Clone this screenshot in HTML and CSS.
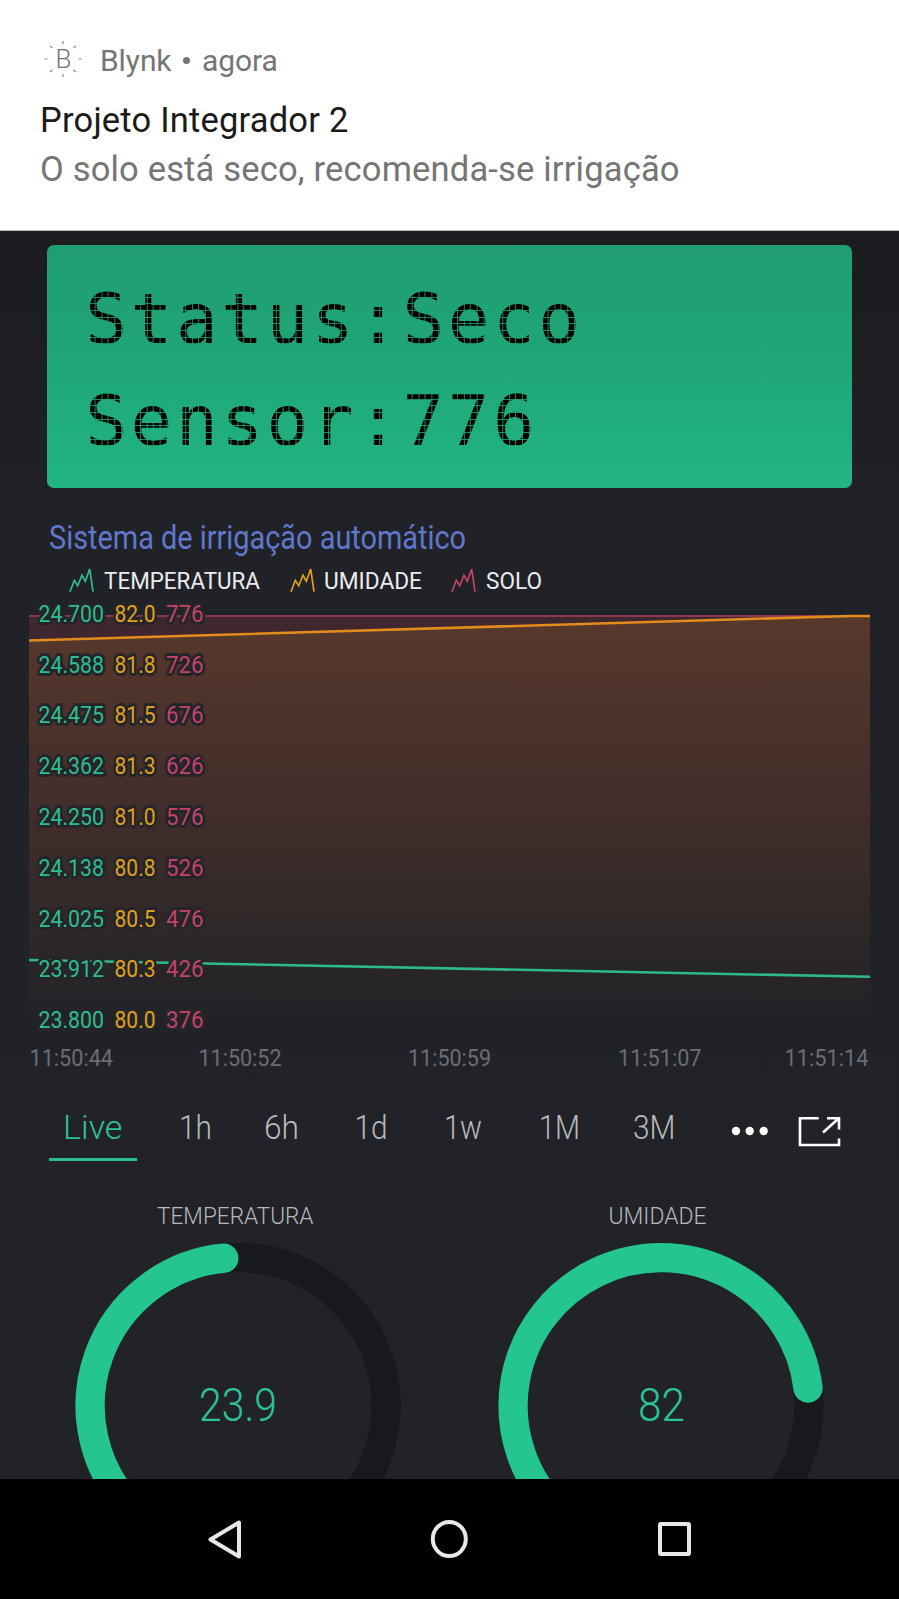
FILE: index.html
```html
<!DOCTYPE html>
<html lang="pt-BR">
<head>
<meta charset="utf-8">
<title>Blynk</title>
<link rel="stylesheet" href="styles.css">
</head>
<body>
<header class="notice">
  <div class="source">
    <svg class="logo" width="40" height="40" viewBox="0 0 40 40">
      <path d="M20 2v3M20 35v3M1.500 20h3M35.500 20h3M7 7l2.500 2M33 7l-2.500 2M7 33l2.500-2M33 33l-2.500-2"/>
      <text x="12.500" y="29">B</text>
    </svg>
    <span class="app-name">Blynk</span><i class="bullet"></i><span>agora</span>
  </div>
  <h1>Projeto Integrador 2</h1>
  <p>O solo está seco, recomenda-se irrigação</p>
</header>
<main>
  <section class="lcd">
    <div>Status:Seco</div>
    <div>Sensor:776</div>
  </section>
  <svg class="title" width="430" height="48"><text x="0" y="37" textLength="417" lengthAdjust="spacingAndGlyphs">Sistema de irrigação automático</text></svg>
  <div class="legend">
    <svg class="teal" width="200" height="36"><polyline points="1,26.700 5.300,15.300 8.700,20.700 13,10.300 16.300,16.300 20.700,4 24,26.700"/><text x="35" y="24" textLength="156" lengthAdjust="spacingAndGlyphs">TEMPERATURA</text></svg>
    <svg class="amber" width="141" height="36"><polyline points="1,26.700 5.300,15.300 8.700,20.700 13,10.300 16.300,16.300 20.700,4 24,26.700"/><text x="34" y="24" textLength="98" lengthAdjust="spacingAndGlyphs">UMIDADE</text></svg>
    <svg class="rose" width="100" height="36"><polyline points="1,26.700 5.300,15.300 8.700,20.700 13,10.300 16.300,16.300 20.700,4 24,26.700"/><text x="35" y="24" textLength="56" lengthAdjust="spacingAndGlyphs">SOLO</text></svg>
  </div>
  <svg class="chart" width="899" height="480" viewBox="0 597 899 480">
    <defs>
      <linearGradient id="humidity" x1="0" y1="616" x2="0" y2="1022" gradientUnits="userSpaceOnUse">
        <stop offset="0" stop-color="#58382b"/><stop offset=".5" stop-color="#402d2a"/><stop offset=".78" stop-color="#2e2828"/><stop offset="1" stop-color="#212227"/>
      </linearGradient>
    </defs>
    <path d="M29 616H870V642H29z" fill="#40272f"/>
    <path d="M29 640.500L850 616H870V1022H29z" fill="url(#humidity)"/>
    <path d="M29 616H870" stroke="#8a3a50" stroke-width="2"/>
    <path d="M29 640.500L850 616H870" fill="none" stroke="#e28c1c" stroke-width="2.600"/>
    <path d="M29 960L205 963.500L870 976.800" fill="none" stroke="#2dba88" stroke-width="2.600"/>
    <g class="scale teal">
      <text x="38.500" y="622" textLength="65.500" lengthAdjust="spacingAndGlyphs">24.700</text>
      <text x="38.500" y="673" textLength="65.500" lengthAdjust="spacingAndGlyphs">24.588</text>
      <text x="38.500" y="723.400" textLength="65.500" lengthAdjust="spacingAndGlyphs">24.475</text>
      <text x="38.500" y="774" textLength="65.500" lengthAdjust="spacingAndGlyphs">24.362</text>
      <text x="38.500" y="825" textLength="65.500" lengthAdjust="spacingAndGlyphs">24.250</text>
      <text x="38.500" y="876" textLength="65.500" lengthAdjust="spacingAndGlyphs">24.138</text>
      <text x="38.500" y="927" textLength="65.500" lengthAdjust="spacingAndGlyphs">24.025</text>
      <text x="38.500" y="977.400" textLength="65.500" lengthAdjust="spacingAndGlyphs">23.912</text>
      <text x="38.500" y="1028" textLength="65.500" lengthAdjust="spacingAndGlyphs">23.800</text>
    </g>
    <g class="scale amber">
      <text x="114.500" y="622" textLength="41" lengthAdjust="spacingAndGlyphs">82.0</text>
      <text x="114.500" y="673" textLength="41" lengthAdjust="spacingAndGlyphs">81.8</text>
      <text x="114.500" y="723.400" textLength="41" lengthAdjust="spacingAndGlyphs">81.5</text>
      <text x="114.500" y="774" textLength="41" lengthAdjust="spacingAndGlyphs">81.3</text>
      <text x="114.500" y="825" textLength="41" lengthAdjust="spacingAndGlyphs">81.0</text>
      <text x="114.500" y="876" textLength="41" lengthAdjust="spacingAndGlyphs">80.8</text>
      <text x="114.500" y="927" textLength="41" lengthAdjust="spacingAndGlyphs">80.5</text>
      <text x="114.500" y="977.400" textLength="41" lengthAdjust="spacingAndGlyphs">80.3</text>
      <text x="114.500" y="1028" textLength="41" lengthAdjust="spacingAndGlyphs">80.0</text>
    </g>
    <g class="scale rose">
      <text x="166" y="622" textLength="37.500" lengthAdjust="spacingAndGlyphs">776</text>
      <text x="166" y="673" textLength="37.500" lengthAdjust="spacingAndGlyphs">726</text>
      <text x="166" y="723.400" textLength="37.500" lengthAdjust="spacingAndGlyphs">676</text>
      <text x="166" y="774" textLength="37.500" lengthAdjust="spacingAndGlyphs">626</text>
      <text x="166" y="825" textLength="37.500" lengthAdjust="spacingAndGlyphs">576</text>
      <text x="166" y="876" textLength="37.500" lengthAdjust="spacingAndGlyphs">526</text>
      <text x="166" y="927" textLength="37.500" lengthAdjust="spacingAndGlyphs">476</text>
      <text x="166" y="977.400" textLength="37.500" lengthAdjust="spacingAndGlyphs">426</text>
      <text x="166" y="1028" textLength="37.500" lengthAdjust="spacingAndGlyphs">376</text>
    </g>
    <g class="times">
      <text x="29.500" y="1066" textLength="83.500" lengthAdjust="spacingAndGlyphs">11:50:44</text>
      <text x="198.500" y="1066" textLength="83" lengthAdjust="spacingAndGlyphs">11:50:52</text>
      <text x="408" y="1066" textLength="83" lengthAdjust="spacingAndGlyphs">11:50:59</text>
      <text x="618" y="1066" textLength="83.500" lengthAdjust="spacingAndGlyphs">11:51:07</text>
      <text x="784.500" y="1066" textLength="84" lengthAdjust="spacingAndGlyphs">11:51:14</text>
    </g>
  </svg>
  <nav class="ranges">
    <a class="active"><svg width="70" height="46"><text x="0" y="32" textLength="59.500" lengthAdjust="spacingAndGlyphs">Live</text></svg></a>
    <a><svg width="84" height="46"><text x="0" y="32" textLength="33" lengthAdjust="spacingAndGlyphs">1h</text></svg></a>
    <a><svg width="91" height="46"><text x="1" y="32" textLength="35" lengthAdjust="spacingAndGlyphs">6h</text></svg></a>
    <a><svg width="89" height="46"><text x="0.500" y="32" textLength="33" lengthAdjust="spacingAndGlyphs">1d</text></svg></a>
    <a><svg width="96" height="46"><text x="1" y="32" textLength="38" lengthAdjust="spacingAndGlyphs">1w</text></svg></a>
    <a><svg width="93" height="46"><text x="0" y="32" textLength="41" lengthAdjust="spacingAndGlyphs">1M</text></svg></a>
    <a><svg width="98" height="46"><text x="1" y="32" textLength="42.500" lengthAdjust="spacingAndGlyphs">3M</text></svg></a>
    <svg class="more" width="38" height="44"><circle cx="5" cy="24" r="4.200"/><circle cx="18.700" cy="24" r="4.200"/><circle cx="32.700" cy="24" r="4.200"/></svg>
    <svg class="expand" width="44" height="44"><path d="M20.700 11.300H2V38H41V31.500M29 11.300H41V22.500M25 25.500L40 12"/></svg>
  </nav>
  <section class="gauges">
    <svg width="330" height="279" viewBox="73 1200 330 279">
      <text class="label" x="157" y="1224" textLength="156.500" lengthAdjust="spacingAndGlyphs">TEMPERATURA</text>
      <circle class="track" cx="238.200" cy="1405.500" r="148"/>
      <path class="level" d="M133.500 1510.200A148 148 0 0 1 223.800 1258.200"/>
      <text class="value" x="199" y="1421.300" textLength="78" lengthAdjust="spacingAndGlyphs">23.9</text>
    </svg>
    <svg width="330" height="279" viewBox="496 1200 330 279">
      <text class="label" x="608.500" y="1224" textLength="98" lengthAdjust="spacingAndGlyphs">UMIDADE</text>
      <circle class="track" cx="661" cy="1405.500" r="148"/>
      <path class="level" d="M556.300 1510.200A148 148 0 1 1 808 1388"/>
      <text class="value" x="638" y="1421.300" textLength="47" lengthAdjust="spacingAndGlyphs">82</text>
    </svg>
  </section>
</main>
<footer class="system">
  <svg width="40" height="44"><path d="M6.500 22.500L35 5.500V39.500z"/></svg>
  <svg width="40" height="44"><ellipse cx="21.300" cy="22" rx="16.500" ry="17"/></svg>
  <svg width="40" height="44"><rect x="8" y="7" width="29" height="30" rx="1"/></svg>
</footer>
</body>
</html>
```

FILE: styles.css
```css
* { box-sizing: border-box; }
body { margin: 0; width: 899px; height: 1599px; overflow: hidden; display: flex; flex-direction: column; background: #212227; font-family: Roboto, sans-serif; }
svg { display: block; flex: none; overflow: visible; }
.notice { height: 231px; flex: none; background: #fff; padding: 38px 0 0 40px; color: #757575; border-bottom: 1px solid #b5b7b8; }
.source { display: flex; align-items: center; height: 42px; font-size: 30px; letter-spacing: -.1px; padding-top: 2px; }
.logo { margin: -3px 17.500px 0 2.500px; }
.logo path { stroke: #8a8a8a; stroke-width: 1.200; }
.logo text { font: 300 26px Roboto, sans-serif; fill: #757575; }
.bullet { width: 7px; height: 7px; border-radius: 50%; background: #757575; margin: 0 12px 0 11.500px; }
h1 { margin: 17px 0 0; font-size: 34.500px; line-height: 46px; font-weight: 400; letter-spacing: .2px; color: #1b1b1b; }
p { margin: 3px 0 0; font-size: 34.500px; line-height: 46px; letter-spacing: .18px; }
main { height: 1248px; flex: none; overflow: hidden; background: linear-gradient(#1a1c1f, #202227 300px, #222328); padding-top: 14px; }
.lcd { width: 805px; height: 243px; margin-left: 47px; border-radius: 7px; background: linear-gradient(#209d73, #1fa578 45%, #22b584); padding: 22px 0 0 38.300px; font: 69.500px/101.800px "DejaVu Sans Mono", monospace; letter-spacing: 3.460px; color: #000; }
/* A 6.65px cell mask gives the characters their dot-matrix look. */
.lcd div {
  height: 101.800px;
  padding-top: 1px;
  white-space: pre;
  mask-image: repeating-linear-gradient(90deg, #000 0 5.750px, rgba(0,0,0,.2) 5.750px 6.650px), repeating-linear-gradient(#000 0 5.750px, rgba(0,0,0,.2) 5.750px 6.650px);
  mask-size: 45.300px 100%;
  mask-position: 3.700px 4px;
  mask-composite: intersect;
}
.title { margin: 24px 0 0 49px; fill: #6078cb; font-size: 32.500px; font-weight: 400; }
.legend { display: flex; height: 32px; margin: 5px 0 0 69px; font-size: 24.500px; gap: 21px; }
.legend text { fill: #ececee; font-weight: 400; }
.legend polyline { fill: none; stroke: currentColor; stroke-width: 1.700; }
.legend svg:nth-child(2) { margin-right: -1px; }
.teal { color: #2fbd8e; }
.amber { color: #e0a01c; }
.rose { color: #c34366; }
.chart { font-size: 24.500px; font-weight: 400; }
.scale text { fill: currentColor; stroke: #24252a; stroke-width: 6px; stroke-linejoin: round; paint-order: stroke; }
.times text { fill: #6c6d72; }
.ranges { display: flex; height: 86px; padding: 30px 0 0 49px; font-size: 33px; font-weight: 350; color: #b9babd; }
.ranges a { height: 54px; }
.ranges text { fill: currentColor; }
.ranges .active { width: 88px; padding-left: 14px; margin-right: 42px; border-bottom: 3px solid #2fbd8e; color: #2cc092; }
.more { fill: #fff; margin-left: .500px; }
.expand { fill: none; stroke: #fff; stroke-width: 2.600; margin-left: 29.500px; }
.gauges { display: flex; gap: 93px; margin: 37px 0 0 73px; }
.label { font-size: 24.500px; font-weight: 350; fill: #b8b9bc; }
.track { fill: none; stroke: #18191c; stroke-width: 29.300; }
.level { fill: none; stroke: #25c58f; stroke-width: 29.300; stroke-linecap: round; }
.value { font-size: 46px; font-weight: 300; fill: #2bc494; }
.system { height: 120px; flex: none; background: #000; display: flex; padding: 38px 0 0 204px; gap: 185px; }
.system svg { fill: none; stroke: #e8e8e8; stroke-width: 4; stroke-linejoin: round; margin-right: -1px; }
```
